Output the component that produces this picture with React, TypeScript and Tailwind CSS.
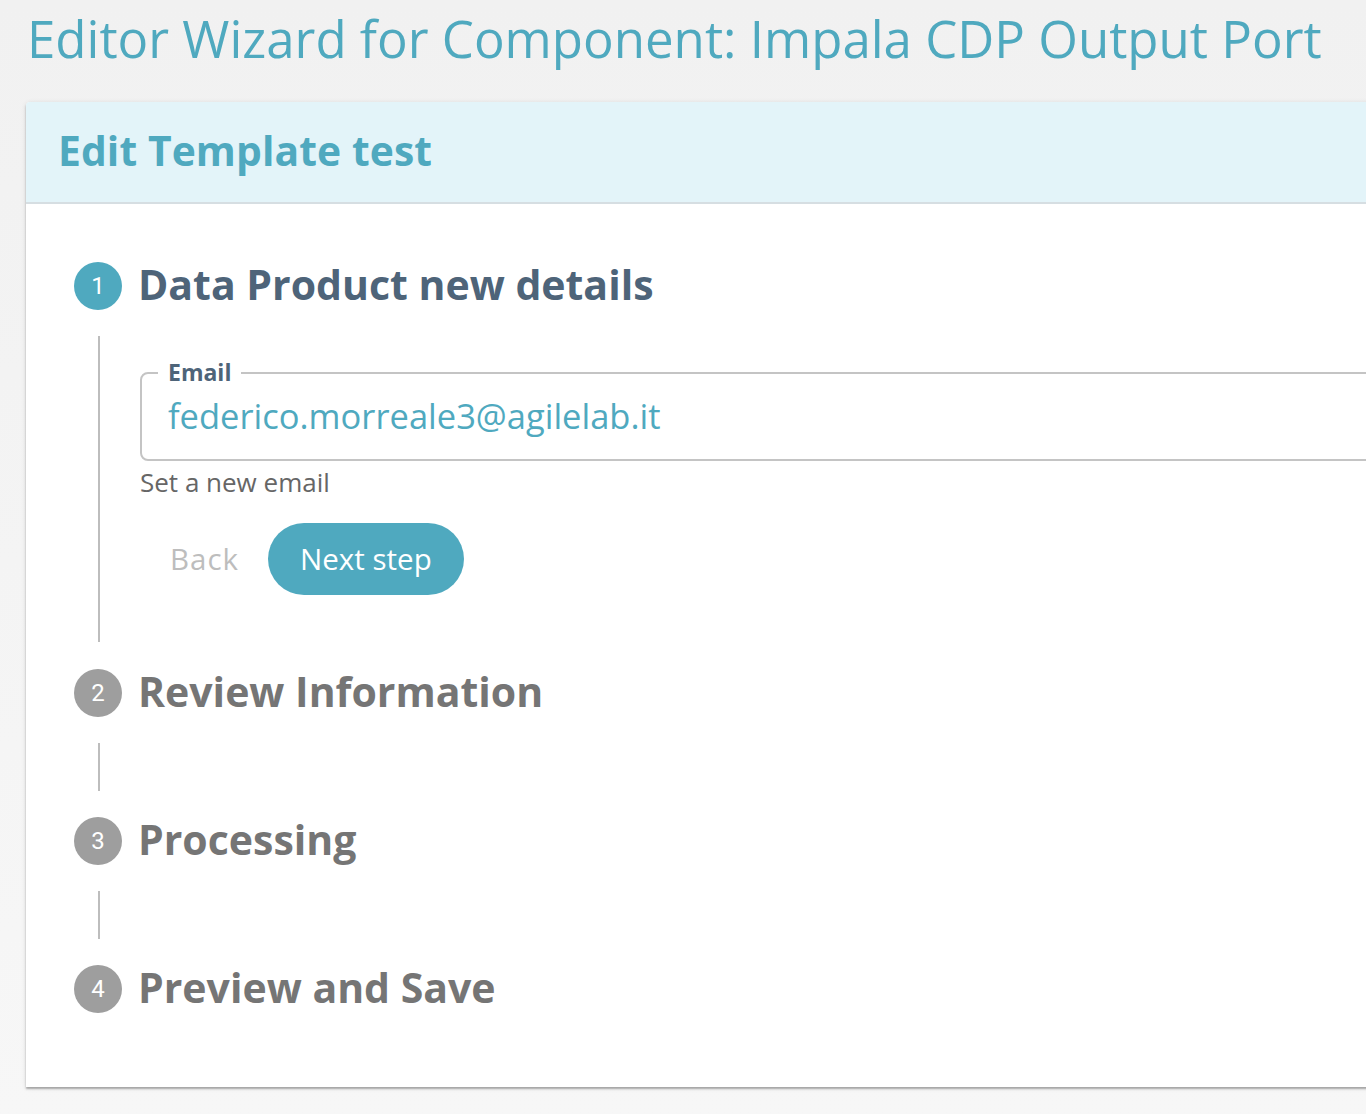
const steps = ["Review Information", "Processing", "Preview and Save"];

function StepIcon({ n, active }: { n: number; active?: boolean }) {
  return (
    <div
      className={`flex h-12 w-12 shrink-0 items-center justify-center rounded-full text-[24px] leading-none text-white ${
        active ? "bg-[#4fa9bf]" : "bg-[#9e9e9e]"
      }`}
      style={{ fontFamily: "Roboto, sans-serif" }}
    >
      {n}
    </div>
  );
}

function StepLabel({ n, label, active }: { n: number; label: string; active?: boolean }) {
  return (
    <div className="flex items-start gap-[16px]">
      <StepIcon n={n} active={active} />
      <span
        className={`whitespace-nowrap pt-[2px] text-[41px] font-bold leading-none ${
          active ? "text-[#4e6479]" : "text-[#757575]"
        }`}
      >
        {label}
      </span>
    </div>
  );
}

export default function App() {
  return (
    <div
      className="min-h-screen overflow-hidden bg-gradient-to-b from-[#f1f1f1] to-[#f7f7f7] pl-[26px] pt-[13px]"
      style={{ fontFamily: '"Open Sans", sans-serif' }}
    >
      <h1 className="whitespace-nowrap pl-px text-[51px] font-normal leading-none text-[#4fa9bf]">
        Editor Wizard for Component: Impala CDP Output Port
      </h1>

      <div className="mt-[38px] w-[1400px] rounded-tl-[4px] bg-white shadow-[0_2px_2px_rgba(0,0,0,0.28),0_1px_5px_rgba(0,0,0,0.12)]">
        {/* Header */}
        <div className="h-[102px] rounded-tl-[4px] border-b-2 border-[#d6dee2] bg-[#e3f4f9] pl-[32px] pt-[28px]">
          <h2 className="whitespace-nowrap text-[40.8px] font-bold leading-none tracking-[0.1px] text-[#4fa9bf]">
            Edit Template test
          </h2>
        </div>

        {/* Stepper */}
        <div className="pb-[74px] pl-[48px] pt-[58px]">
          <StepLabel n={1} label="Data Product new details" active />

          <div className="ml-[24px] mt-[26px] h-[306px] border-l-2 border-[#bdbdbd] pl-[40px] pt-[25px]">
            <fieldset className="h-[100px] rounded-[8px] border-2 border-[#c4c4c4] pl-[26px] pr-4">
              <legend className="-ml-[10px] px-[10px] text-[23px] font-bold leading-none text-[#4e6479]">
                Email
              </legend>
              <div className="mt-[15px] whitespace-nowrap text-[34.5px] leading-none text-[#4fa9bf]">
                federico.morreale3@agilelab.it
              </div>
            </fieldset>
            <p className="mt-[8px] text-[26px] leading-none text-[#666666]">Set a new email</p>
            <div className="mt-[28px] flex items-center">
              <button
                type="button"
                className="flex h-[72px] items-center pl-[30px] pr-[29px] text-[29.5px] font-medium leading-none tracking-[1px] text-[#bdbdbd]"
              >
                Back
              </button>
              <button
                type="button"
                className="flex h-[72px] items-center rounded-full bg-[#4fa9bf] px-[32px] text-[29.5px] font-medium leading-none text-white"
              >
                Next step
              </button>
            </div>
          </div>

          {steps.map((s, i) => (
            <div key={s}>
              {i > 0 && (
                <div className="ml-[24px] my-[26px] h-[48px] border-l-2 border-[#bdbdbd]" />
              )}
              <div className={i === 0 ? "mt-[27px]" : ""}>
                <StepLabel n={i + 2} label={s} />
              </div>
            </div>
          ))}
        </div>
      </div>
    </div>
  );
}
